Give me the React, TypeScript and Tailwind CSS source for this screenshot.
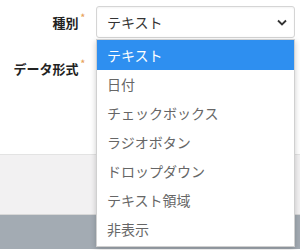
import React from 'react';

const items = ['テキスト', '日付', 'チェックボックス', 'ラジオボタン', 'ドロップダウン', 'テキスト領域', '非表示'];

const Label = ({ text }: { text: string }) => (
  <span className="flex items-start text-[13px] font-bold text-[#222] leading-none">
    {text}
    <span className="ml-[2px] -mt-[3px] text-[9px] leading-none text-[#e8a25a]">*</span>
  </span>
);

export default function App() {
  return (
    <div
      className="relative w-[300px] h-[250px] overflow-hidden bg-white"
      style={{ fontFamily: '"Noto Sans CJK JP", "Noto Sans", sans-serif' }}
    >
      <div className="h-[155px] border-b border-[#e3e3e3] bg-white">
        <div className="flex items-center pt-[6px]">
          <div className="w-[96px] pr-[11px] flex justify-end">
            <Label text="種別" />
          </div>
          <div className="w-[199px] h-[32px] border border-[#d5d5d5] rounded-[3px] flex items-center justify-between pl-[10px] pr-[6px] text-[14px] text-[#333] shadow-[inset_0_1px_2px_rgba(0,0,0,0.05)]">
            <span>テキスト</span>
            <svg width="10" height="7" viewBox="0 0 10 7" className="mr-[1px]">
              <path d="M1 1.5 L5 5.5 L9 1.5" fill="none" stroke="#333" strokeWidth="1.8" />
            </svg>
          </div>
        </div>
        <div className="flex pt-[24px]">
          <div className="w-[96px] pr-[11px] flex justify-end">
            <Label text="データ形式" />
          </div>
        </div>
      </div>
      <div className="h-[60px] border-b border-[#d8d8d8] bg-[#f2f1f2]" />
      <div className="h-[34px] bg-[#a3abb3]" />

      <div className="absolute left-[96px] top-[39px] w-[199px] bg-white border border-[#d0d0d0] shadow-[0_2px_6px_rgba(0,0,0,0.2)] pb-[2px]">
        {items.map((it, i) => (
          <div
            key={it}
            className={`flex items-center pl-[10px] text-[14px] ${i === 0 ? 'h-[30px] bg-[#2e8ff0] text-white' : 'h-[29px] text-[#666]'}`}
          >
            {it}
          </div>
        ))}
      </div>
    </div>
  );
}
